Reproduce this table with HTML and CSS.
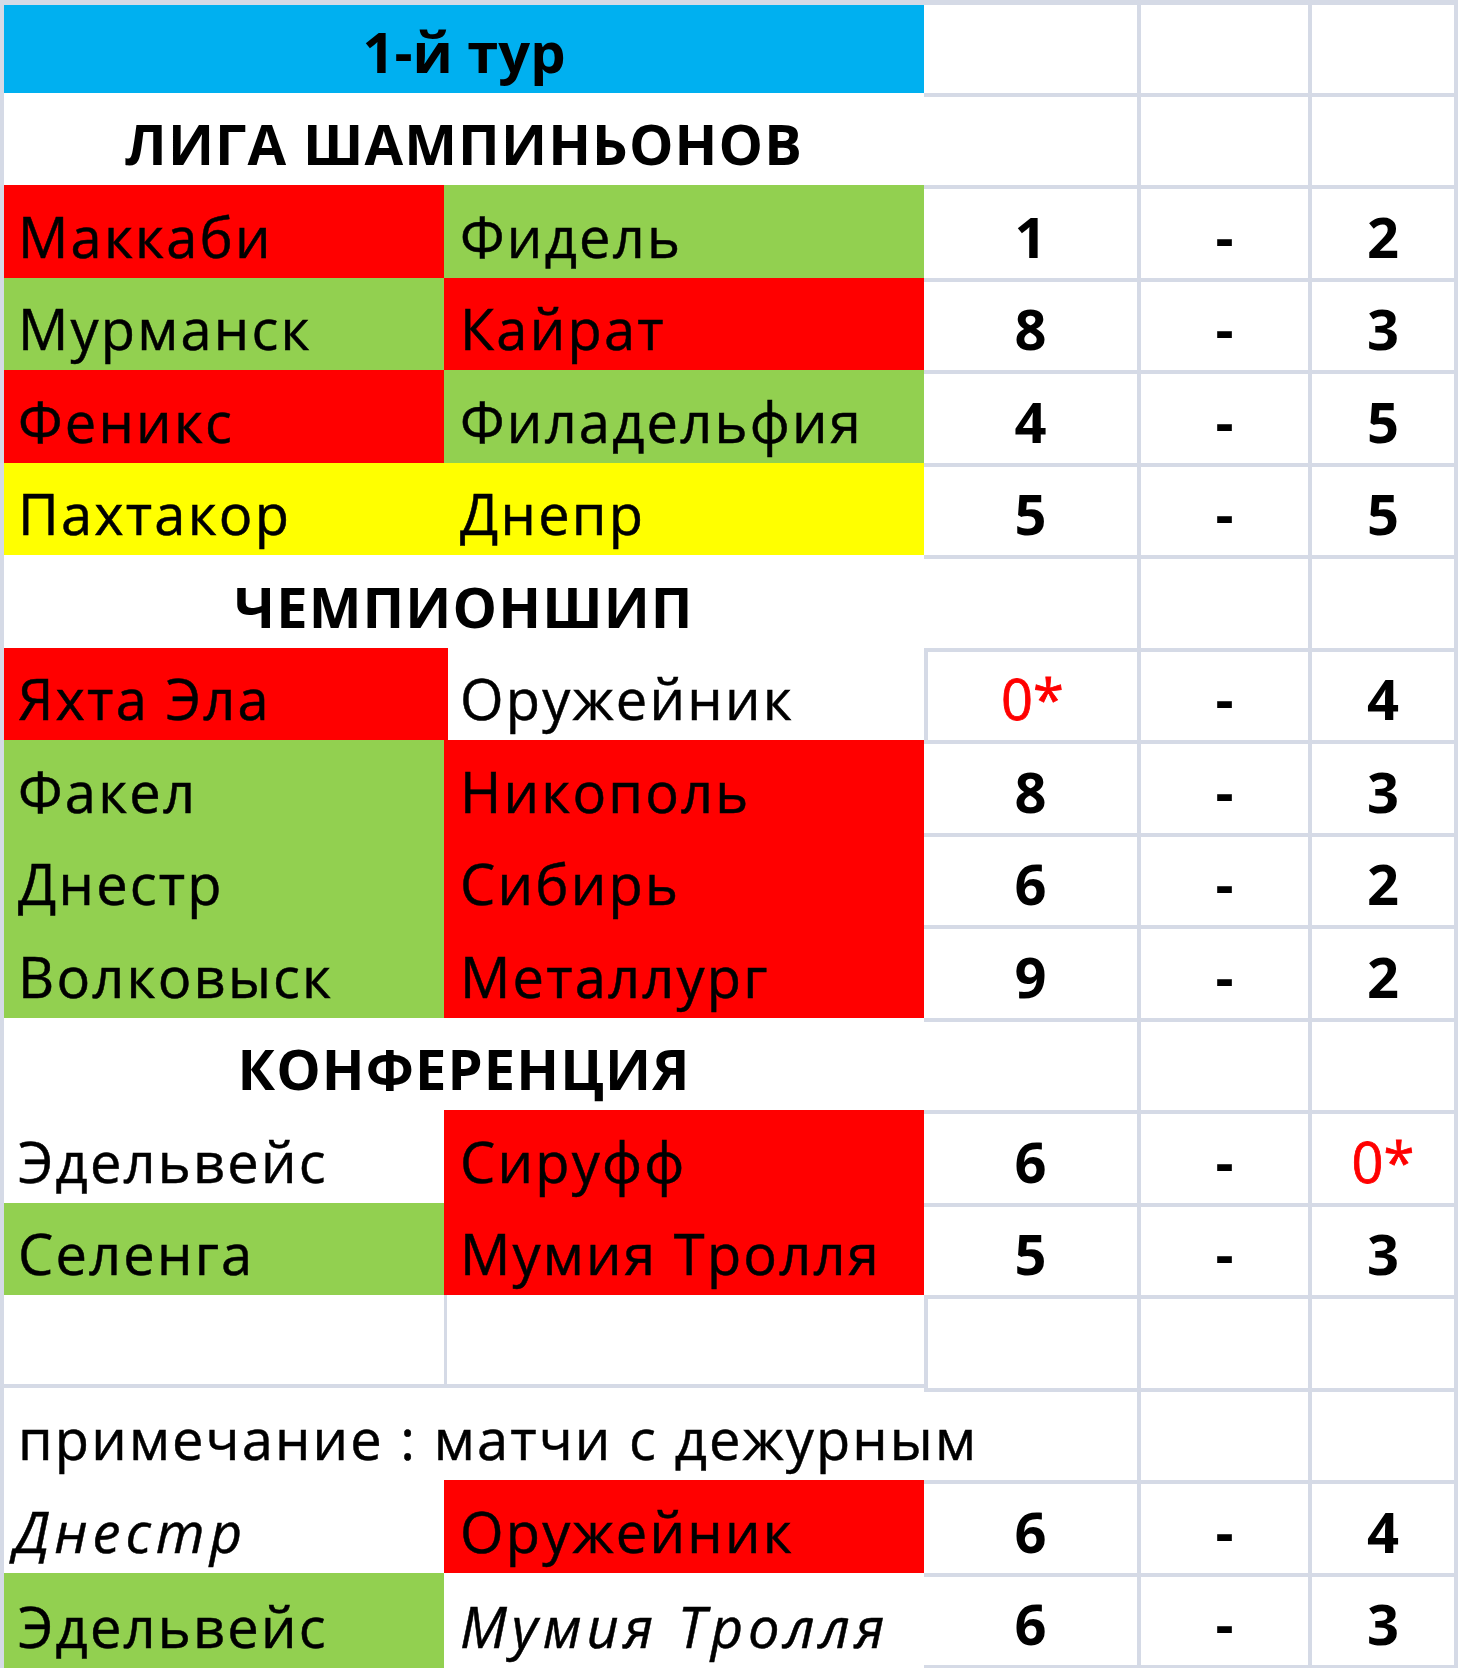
FILE: index.html
```html
<!DOCTYPE html>
<html lang="ru">
<head>
<meta charset="utf-8">
<title>1-й тур</title>
<link rel="stylesheet" href="styles.css">
</head>
<body>
<div class="sheet">
  <div class="cell ab title blue">1-й тур</div>
  <div class="cell c first"></div><div class="cell d first"></div><div class="cell e first"></div>

  <div class="cell ab head">ЛИГА ШАМПИНЬОНОВ</div>
  <div class="cell c"></div><div class="cell d"></div><div class="cell e"></div>

  <div class="cell a red">Маккаби</div><div class="cell b green">Фидель</div>
  <div class="cell c score">1</div><div class="cell d score">-</div><div class="cell e score">2</div>

  <div class="cell a green">Мурманск</div><div class="cell b red">Кайрат</div>
  <div class="cell c score">8</div><div class="cell d score">-</div><div class="cell e score">3</div>

  <div class="cell a red">Феникс</div><div class="cell b green">Филадельфия</div>
  <div class="cell c score">4</div><div class="cell d score">-</div><div class="cell e score">5</div>

  <div class="cell a yellow">Пахтакор</div><div class="cell b yellow">Днепр</div>
  <div class="cell c score">5</div><div class="cell d score">-</div><div class="cell e score">5</div>

  <div class="cell ab head">ЧЕМПИОНШИП</div>
  <div class="cell c"></div><div class="cell d"></div><div class="cell e"></div>

  <div class="cell a red wide">Яхта Эла</div><div class="cell b">Оружейник</div>
  <div class="cell c score lined zero">0*</div><div class="cell d score">-</div><div class="cell e score">4</div>

  <div class="cell a green">Факел</div><div class="cell b red">Никополь</div>
  <div class="cell c score">8</div><div class="cell d score">-</div><div class="cell e score">3</div>

  <div class="cell a green">Днестр</div><div class="cell b red">Сибирь</div>
  <div class="cell c score">6</div><div class="cell d score">-</div><div class="cell e score">2</div>

  <div class="cell a green">Волковыск</div><div class="cell b red">Металлург</div>
  <div class="cell c score">9</div><div class="cell d score">-</div><div class="cell e score">2</div>

  <div class="cell ab head">КОНФЕРЕНЦИЯ</div>
  <div class="cell c"></div><div class="cell d"></div><div class="cell e"></div>

  <div class="cell a">Эдельвейс</div><div class="cell b red">Сируфф</div>
  <div class="cell c score">6</div><div class="cell d score">-</div><div class="cell e score zero">0*</div>

  <div class="cell a green">Селенга</div><div class="cell b red">Мумия Тролля</div>
  <div class="cell c score">5</div><div class="cell d score">-</div><div class="cell e score">3</div>

  <div class="cell a empty"></div><div class="cell b empty"></div>
  <div class="cell c lined"></div><div class="cell d"></div><div class="cell e"></div>

  <div class="cell ab note">примечание : матчи с дежурным</div>
  <div class="cell c"></div><div class="cell d"></div><div class="cell e"></div>

  <div class="cell a it">Днестр</div><div class="cell b red">Оружейник</div>
  <div class="cell c score">6</div><div class="cell d score">-</div><div class="cell e score">4</div>

  <div class="cell a green">Эдельвейс</div><div class="cell b it">Мумия Тролля</div>
  <div class="cell c score last">6</div><div class="cell d score last">-</div><div class="cell e score last">3</div>
</div>
</body>
</html>
```
FILE: styles.css
```css
:root {
  --grid: #d5dae6;
}
html, body {
  margin: 0;
  padding: 0;
  background: #ffffff;
}
body {
  width: 1460px;
  height: 1668px;
  overflow: hidden;
  font-family: "Open Sans", Lato, sans-serif;
  font-size: 56px;
  color: #000;
}
.sheet {
  display: grid;
  grid-template-columns: 440px 480px 213px 171px 150px;
  grid-template-rows: 88px repeat(16, 92.47px) 95.5px;
  border-top: 5px solid var(--grid);
  border-left: 4px solid var(--grid);
  width: 1454px;
  box-sizing: content-box;
}
.cell {
  box-sizing: border-box;
  display: flex;
  align-items: flex-end;
  line-height: 1;
  padding: 0 0 14px 14px;
  white-space: nowrap;
  min-width: 0;
  letter-spacing: 2.2px;
  -webkit-text-stroke: 0.5px currentColor;
}
.ab {
  grid-column: 1 / 3;
  justify-content: center;
  padding-left: 0;
  font-weight: 700;
  letter-spacing: 1.1px;
  -webkit-text-stroke: 0;
}
.title { letter-spacing: 0; }
.note {
  justify-content: flex-start;
  padding-left: 14px;
  font-weight: 400;
  letter-spacing: 2.1px;
  -webkit-text-stroke: 0.5px currentColor;
}
.b { padding-left: 16px; }
.c, .d, .e {
  border-top: 4px solid var(--grid);
  justify-content: center;
  padding-left: 0;
}
.d, .e { border-left: 4px solid var(--grid); }
.e { border-right: 4px solid var(--grid); }
.first { border-top: none; }
.last { border-bottom: 3px solid var(--grid); }
.lined { border-left: 4px solid var(--grid); }
.empty { border-top: 0; border-bottom: 4px solid var(--grid); }
.empty.b { border-left: 3px solid var(--grid); }
.score {
  font-weight: 700;
  letter-spacing: 0;
  -webkit-text-stroke: 0;
}
.zero {
  color: #ff0000;
  font-weight: 400;
  -webkit-text-stroke: 0.8px currentColor;
}
.it {
  font-style: italic;
  padding-left: 10px;
  letter-spacing: 5px;
}
.b.it { padding-left: 16px; }
.blue { background: #00b0f0; }
.red { background: #ff0000; }
.green { background: #92d050; }
.yellow { background: #ffff00; }
.wide { margin-right: -4px; position: relative; z-index: 1; }
```
